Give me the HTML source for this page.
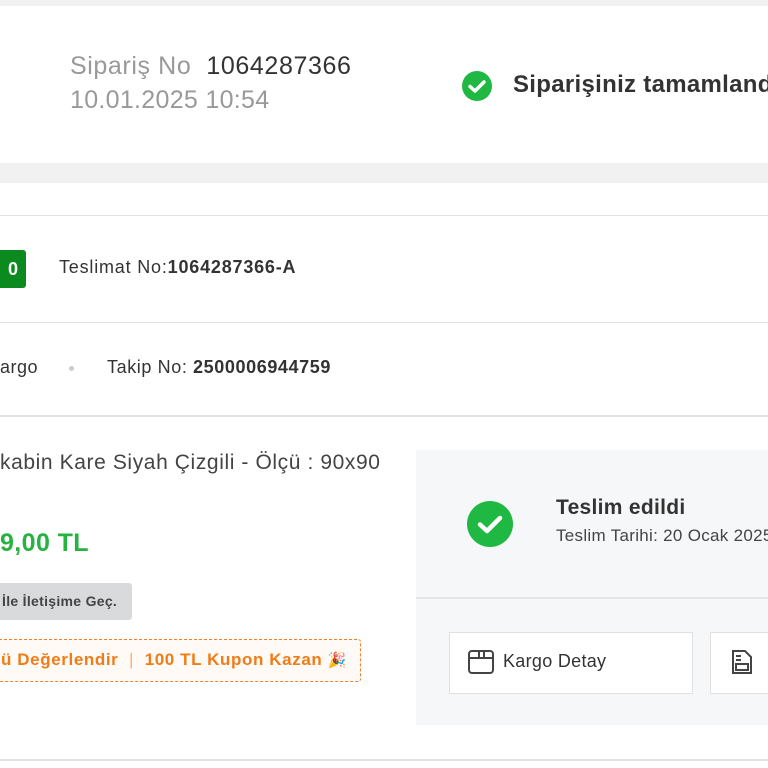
<!DOCTYPE html>
<html><head><meta charset="utf-8"><style>
*{margin:0;padding:0;box-sizing:border-box}
body{width:768px;height:768px;overflow:hidden;background:#fff;font-family:"Liberation Sans",sans-serif;position:relative;color:#333}
.a{position:absolute;white-space:nowrap}
</style></head><body>
<div class="a" style="left:0;top:0;width:768px;height:6px;background:#f1f1f1"></div>
<div class="a" style="left:0;top:163px;width:768px;height:20px;background:#f1f1f1"></div>
<div class="a" style="left:70px;top:52px;font-size:25px;color:#999;letter-spacing:0.6px">Sipariş No <span style="color:#333">&nbsp;1064287366</span></div>
<div class="a" style="left:70px;top:86px;font-size:25px;color:#999;letter-spacing:0.3px">10.01.2025 10:54</div>
<svg class="a" style="left:461px;top:70px" width="32" height="32" viewBox="0 0 32 32"><circle cx="16" cy="16" r="15" fill="#1fb843"/><path d="M9 16.5l5 4.5 9-9" stroke="#fff" stroke-width="3.5" fill="none" stroke-linecap="round" stroke-linejoin="round"/></svg>
<div class="a" style="left:513px;top:71px;font-size:24px;font-weight:bold;color:#333;letter-spacing:0.3px">Siparişiniz tamamlandı</div>
<div class="a" style="left:0;top:215px;width:768px;height:1px;background:#e2e2e2"></div>
<div class="a" style="left:0;top:250px;width:26px;height:38px;background:#0a8a1f;border-radius:0 3px 3px 0;color:#fff;font-size:18px;font-weight:bold;line-height:38px;text-align:right;padding-right:8px">0</div>
<div class="a" style="left:59px;top:257px;font-size:18px;color:#333;letter-spacing:0.8px">Teslimat No:<b>1064287366-A</b></div>
<div class="a" style="left:0;top:322px;width:768px;height:1px;background:#e2e2e2"></div>
<div class="a" style="left:0;top:357px;font-size:18px;color:#333;letter-spacing:0.5px">argo</div>
<div class="a" style="left:69px;top:366px;width:5px;height:5px;border-radius:50%;background:#ccc"></div>
<div class="a" style="left:107px;top:357px;font-size:18px;color:#333;letter-spacing:0.6px">Takip No: <b>2500006944759</b></div>
<div class="a" style="left:0;top:415px;width:768px;height:2px;background:#e2e2e2"></div>
<div class="a" style="left:0;top:451px;font-size:21px;color:#444;letter-spacing:0.6px">kabin Kare Siyah Çizgili - Ölçü : 90x90</div>
<div class="a" style="left:0;top:529px;font-size:25px;font-weight:bold;color:#26b341;letter-spacing:0.4px">9,00 TL</div>
<div class="a" style="left:0;top:583px;width:132px;height:37px;background:#d9dadc;border-radius:0 3px 3px 0;font-size:14px;font-weight:bold;color:#444;line-height:37px;padding-left:2px;letter-spacing:0.3px">İle İletişime Geç.</div>
<div class="a" style="left:-4px;top:639px;width:365px;height:43px;border:1.5px dashed #f08030;border-radius:3px;background:#fffaf5;font-size:17px;font-weight:bold;color:#ef7c18;line-height:40px;padding-left:4px;letter-spacing:0.6px">ü Değerlendir <span style="color:#f5b070;font-weight:normal">&nbsp;|&nbsp;</span> 100 TL Kupon Kazan <span style="font-size:15px">🎉</span></div>
<div class="a" style="left:416px;top:450px;width:352px;height:275px;background:#f6f7f9"></div>
<div class="a" style="left:416px;top:597px;width:352px;height:2px;background:#e3e4e6"></div>
<svg class="a" style="left:466px;top:500px" width="48" height="48" viewBox="0 0 48 48"><circle cx="24" cy="24" r="23" fill="#1fb843"/><path d="M14 24.5l7 6.5 13-13" stroke="#fff" stroke-width="4.5" fill="none" stroke-linecap="round" stroke-linejoin="round"/></svg>
<div class="a" style="left:556px;top:496px;font-size:21px;font-weight:bold;color:#333;letter-spacing:0.3px">Teslim edildi</div>
<div class="a" style="left:556px;top:526px;font-size:17px;color:#444;letter-spacing:0.3px">Teslim Tarihi: 20 Ocak 2025</div>
<div class="a" style="left:449px;top:632px;width:244px;height:62px;border:1px solid #e0e0e0;background:#fff"></div>
<svg class="a" style="left:467px;top:648px" width="28" height="28" viewBox="0 0 28 28"><rect x="2" y="3" width="24" height="22" rx="3" fill="none" stroke="#444" stroke-width="2"/><path d="M2 10h24M12 3v7M17 3v7" stroke="#444" stroke-width="2" fill="none"/></svg>
<div class="a" style="left:503px;top:651px;font-size:18px;color:#333;letter-spacing:0.3px">Kargo Detay</div>
<div class="a" style="left:710px;top:632px;width:80px;height:62px;border:1px solid #e0e0e0;background:#fff"></div>
<svg class="a" style="left:730px;top:648px" width="24" height="28" viewBox="0 0 24 28"><path d="M3 3h12l6 6v16H3z" fill="none" stroke="#444" stroke-width="2"/><path d="M6 8h5M6 12h5M6 16h12v6H6z" stroke="#444" stroke-width="2" fill="none"/></svg>
<div class="a" style="left:0;top:759px;width:768px;height:2px;background:#e2e2e2"></div>
</body></html>
